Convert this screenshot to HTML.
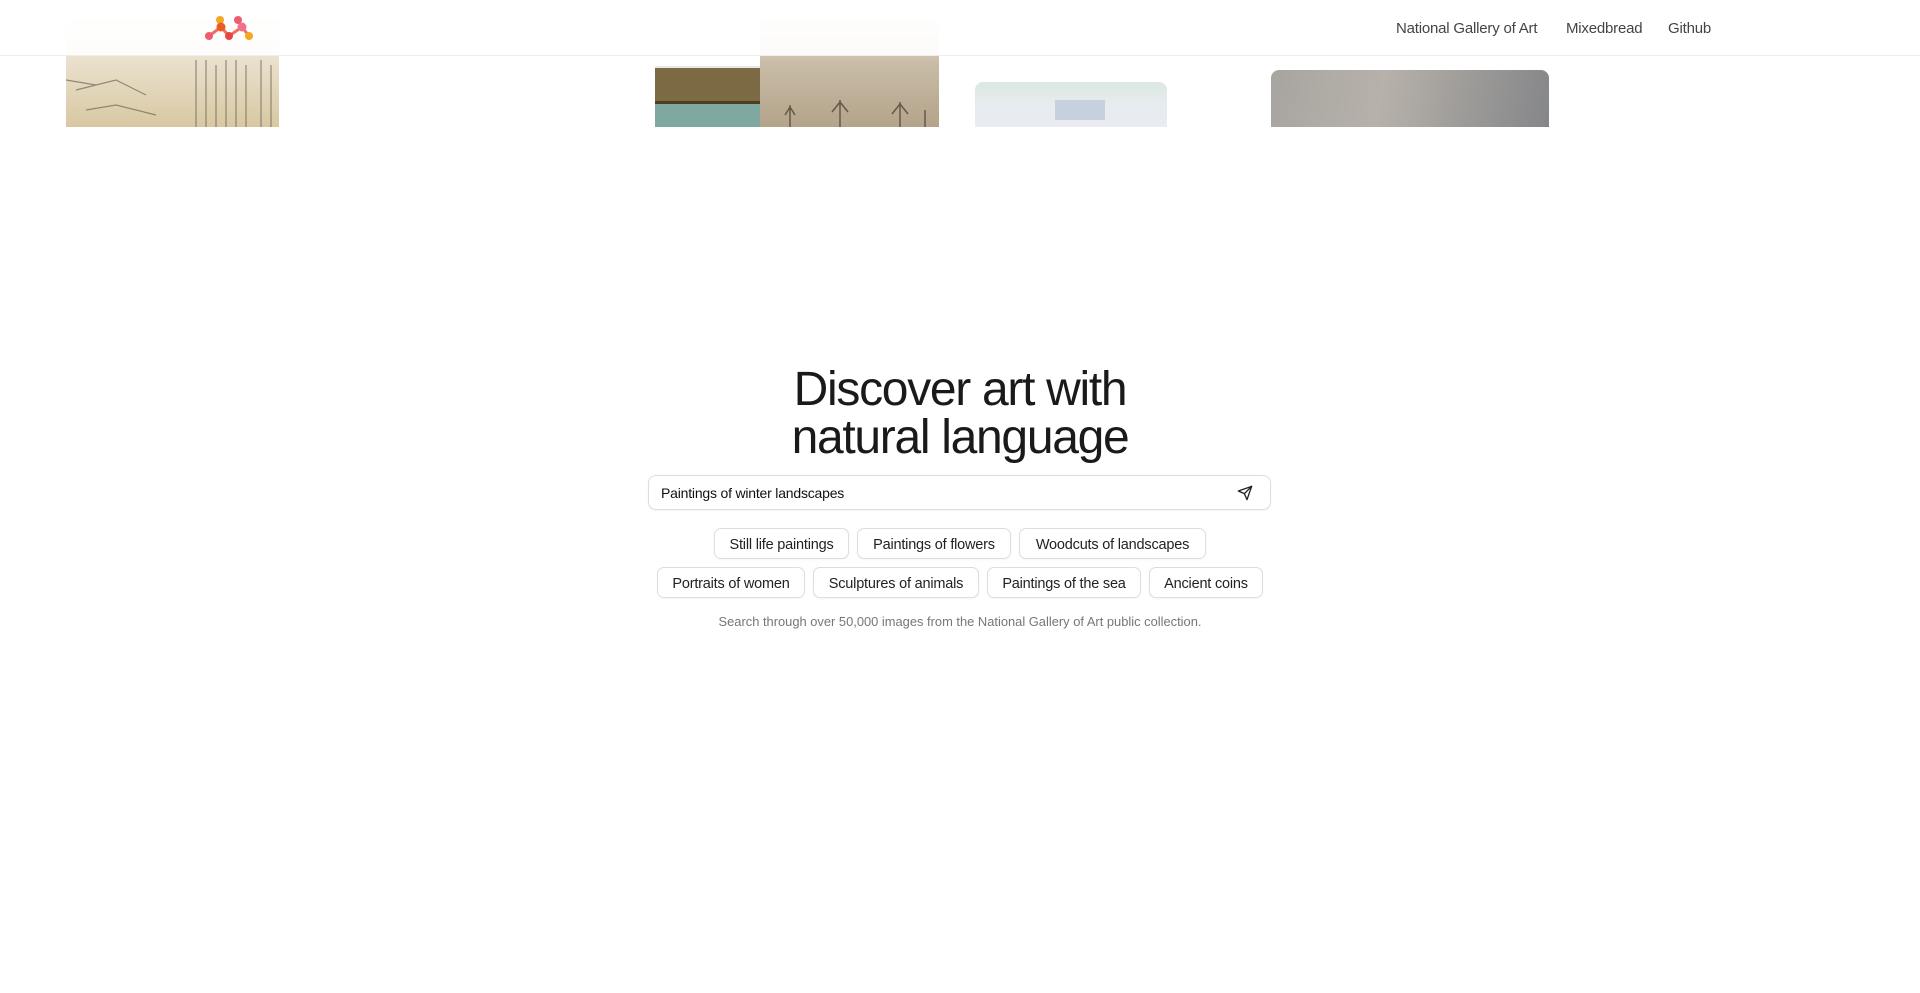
<!DOCTYPE html>
<html><head><meta charset="utf-8"><style>
*{margin:0;padding:0;box-sizing:border-box}
body{width:1920px;height:993px;background:#fff;font-family:"Liberation Sans",Arial,sans-serif;position:relative;overflow:hidden;color:#111}
.img{position:absolute;overflow:hidden}
header{position:absolute;left:0;top:0;width:1920px;height:56px;background:rgba(255,255,255,.92);border-bottom:1px solid #eee;z-index:5}
nav a{position:absolute;top:20px;font-size:15px;color:#444;text-decoration:none;letter-spacing:-.2px}
h1{position:absolute;left:0;width:1920px;top:366px;text-align:center;font-weight:normal;font-size:48px;line-height:48px;letter-spacing:-1.3px;color:#1a1a1a}
.search{position:absolute;left:648px;top:475px;width:623px;height:35px;border:1px solid #ddd;border-radius:8px;font-size:14px;padding:9px 12px;letter-spacing:-.2px;box-shadow:0 1px 2px rgba(0,0,0,.04)}
.chip{position:absolute;height:31px;border:1px solid #ddd;border-radius:7px;font-size:14.5px;line-height:32px;text-align:center;color:#222;letter-spacing:-.2px;box-shadow:0 1px 2px rgba(0,0,0,.04)}
.foot{position:absolute;top:614px;left:0;width:1920px;text-align:center;font-size:12.9px;color:#777}
</style></head><body>
<div class="img" style="left:66px;top:20px;width:213px;height:107px;background:linear-gradient(180deg,#f4f0ea 0,#e9dfcb 40%,#d8c8a2 100%)">
<svg width="213" height="107" style="position:absolute;left:0;top:0"><g stroke="#6e6558" stroke-width="1.2" fill="none" opacity=".7"><path d="M130 40V107M140 40V107M150 45V107M160 40V107M170 40V107M180 45V107M195 40V107M205 45V107"/><path d="M10 70l40 -10l30 15M20 90l30 -5l40 10M0 60l30 5"/></g></svg></div>
<div class="img" style="left:655px;top:66px;width:105px;height:61px;border-top:2px solid #e8e8e8"><div style="height:33px;background:#7b6a44"></div><div style="height:3px;background:#4d3e22"></div><div style="height:30px;background:#7fa8a0"></div></div>
<div class="img" style="left:760px;top:20px;width:179px;height:107px;background:linear-gradient(180deg,#f2eee8 0,#c9bca6 40%,#b3a48a 100%)">
<svg width="179" height="107" style="position:absolute;left:0;top:0"><g stroke="#4f463a" stroke-width="1.5" fill="none" opacity=".8"><path d="M30 107V85M25 95l5 -8l5 8M80 107V80M72 92l8 -10l8 10M140 107V82M132 94l8 -10l8 10M165 107V90"/></g></svg></div>
<div class="img" style="left:975px;top:82px;width:192px;height:45px;border-radius:8px 8px 0 0;background:linear-gradient(180deg,#dbe8e2 0,#e6ecef 50%,#e9ecf2 100%)">
<div style="position:absolute;left:80px;top:18px;width:50px;height:20px;background:#b9c6d6;opacity:.7"></div></div>
<div class="img" style="left:1271px;top:70px;width:278px;height:57px;border-radius:8px 8px 0 0;background:linear-gradient(100deg,#a7a5a0 0,#b7b1aa 40%,#9d9b98 70%,#85868a 100%)"></div>
<header>
<svg style="position:absolute;left:205px;top:12px" width="50" height="32" viewBox="0 0 50 32"><g stroke-width="3" fill="none"><path d="M4 24L16 15L24 24L37 15L44 24" stroke="#f07060"/><path d="M15 8L16 15M33 8L37 15" stroke="#f08060"/></g><circle cx="15" cy="8" r="4" fill="#f5a623"/><circle cx="33" cy="8" r="4" fill="#ef5b6f"/><circle cx="16" cy="15" r="4.5" fill="#ec5a2a"/><circle cx="37" cy="15" r="4.5" fill="#f2708a"/><circle cx="4" cy="24" r="4" fill="#ef5b6f"/><circle cx="24" cy="24" r="4" fill="#e84545"/><circle cx="44" cy="24" r="4" fill="#f5a623"/></svg>
<nav><a style="left:1396px">National Gallery of Art</a><a style="left:1566px">Mixedbread</a><a style="left:1668px">Github</a></nav>
</header>
<h1>Discover art with<br>natural language</h1>
<div class="search">Paintings of winter landscapes
<svg style="position:absolute;left:588px;top:9px" width="16" height="16" viewBox="0 0 24 24" fill="none" stroke="#222" stroke-width="2" stroke-linejoin="round" stroke-linecap="round"><path d="M22 2L11 13"/><path d="M22 2L15 22L11 13L2 9Z"/></svg></div>
<div class="chip" style="left:714px;top:528px;width:135px">Still life paintings</div>
<div class="chip" style="left:857px;top:528px;width:154px">Paintings of flowers</div>
<div class="chip" style="left:1019px;top:528px;width:187px">Woodcuts of landscapes</div>
<div class="chip" style="left:657px;top:567px;width:148px">Portraits of women</div>
<div class="chip" style="left:813px;top:567px;width:166px">Sculptures of animals</div>
<div class="chip" style="left:987px;top:567px;width:154px">Paintings of the sea</div>
<div class="chip" style="left:1149px;top:567px;width:114px">Ancient coins</div>
<div class="foot">Search through over 50,000 images from the National Gallery of Art public collection.</div>
</body></html>
